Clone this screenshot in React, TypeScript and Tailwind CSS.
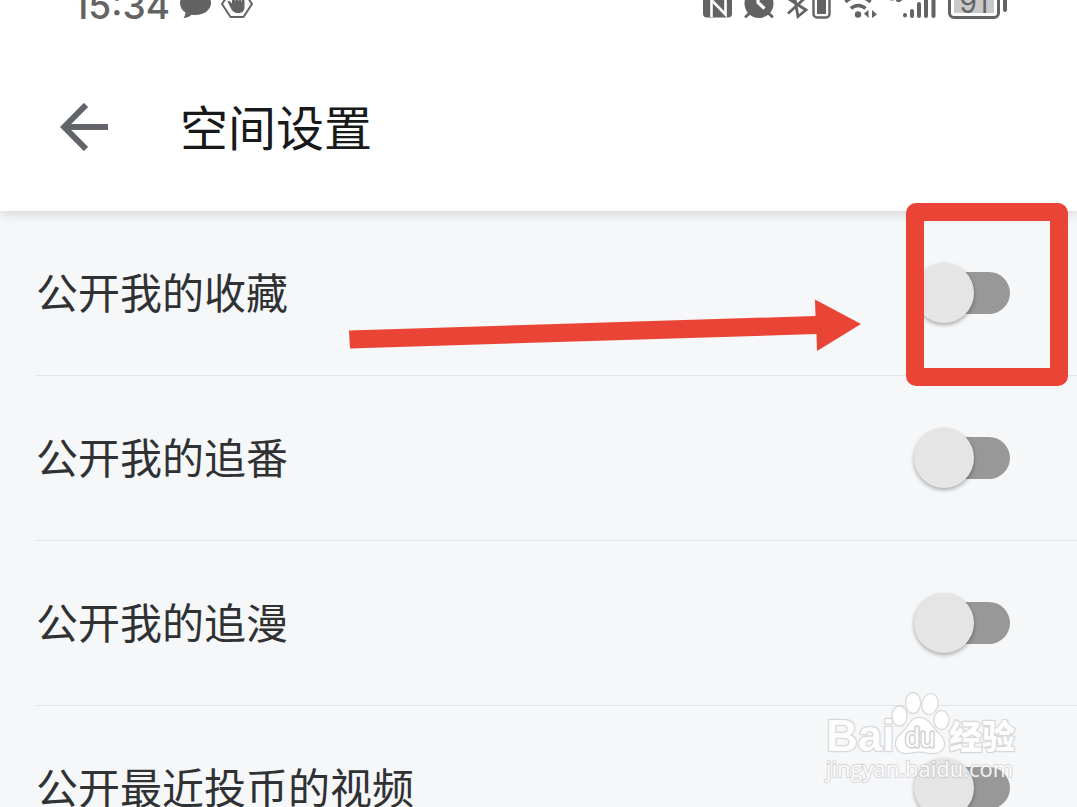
import { useState } from "react";

const ROWS = [
  { id: "favorites", label: "公开我的收藏" },
  { id: "bangumi", label: "公开我的追番" },
  { id: "comics", label: "公开我的追漫" },
  { id: "coins", label: "公开最近投币的视频" },
];

export default function App() {
  const [open, setOpen] = useState<Record<string, boolean>>({});

  function toggle(id: string) {
    setOpen((o) => ({ ...o, [id]: !o[id] }));
  }

  return (
    <div className="relative h-screen overflow-hidden bg-[#f5f7f9] font-['Noto_Sans_CJK_SC',sans-serif]">
      {/* 头部 */}
      <header className="relative bg-white shadow-[0_2px_12px_rgba(0,0,0,0.16)]">
        <StatusBar />
        <div className="flex items-center gap-[72px] pt-[81px] pb-[58px] pl-15">
          <button type="button" aria-label="返回" className="text-[#616569]">
            <svg width="48" height="48" viewBox="0 0 48 48" fill="none" stroke="currentColor" strokeWidth="6">
              <path d="M26 2 4.2 24 26 46" />
              <path d="M7 24h41" />
            </svg>
          </button>
          <h1 className="pb-1 text-5xl leading-12 text-[#18191b]">空间设置</h1>
        </div>
      </header>

      {/* 设置列表 */}
      <main className="pl-9">
        {ROWS.map((row, i) => (
          <div
            key={row.id}
            className="relative flex items-center justify-between border-b border-[#e2e4e7] py-[52px] pr-[67px]"
          >
            <label htmlFor={row.id} className="pb-1 text-[42px] leading-14 text-[#303133]">
              {row.label}
            </label>
            <Switch id={row.id} checked={!!open[row.id]} onChange={() => toggle(row.id)} />
            {i === 0 && <Pointer />}
          </div>
        ))}
      </main>

      <Watermark />
    </div>
  );
}

function Switch({ id, checked, onChange }: { id: string; checked: boolean; onChange: () => void }) {
  return (
    <input
      id={id}
      type="checkbox"
      role="switch"
      checked={checked}
      onChange={onChange}
      className="relative h-15 w-24 shrink-0 appearance-none before:absolute before:top-[9px] before:right-0 before:h-[42px] before:w-20 before:rounded-full before:bg-[#989898] after:absolute after:top-0 after:left-0 after:size-15 after:rounded-full after:bg-[#e5e5e5] after:shadow-[0_2px_4px_rgba(0,0,0,0.32)] checked:before:bg-[#fbb6cb] checked:after:left-9 checked:after:bg-[#fb7299]"
    />
  );
}

// 红框和箭头
function Pointer() {
  return (
    <>
      <svg
        className="pointer-events-none absolute top-[88px] right-[216px]"
        width="512"
        height="52"
        viewBox="0 0 512 52"
        fill="#ea4436"
      >
        <path d="M0 31.5 466.5 17 466 0.5 512 25 468 52 467.5 35 1 49.5z" />
      </svg>
      <div className="pointer-events-none absolute -top-2 right-[9px] h-[183px] w-[162px] rounded-[10px] border-18 border-[#ea4436]" />
    </>
  );
}

function StatusBar() {
  return (
    <div className="flex h-5 items-end justify-between overflow-hidden pr-[70px] pl-[73px] text-[#636363]">
      <div className="flex items-end gap-[10px]">
        <span className="font-['Inter',sans-serif] text-[37px] leading-7 font-medium">15:34</span>
        <svg width="31" height="30" viewBox="0 0 31 30" fill="currentColor">
          <path d="M15.5 0C7 0 0 6 0 13c0 4 2 7.300 5.500 9.500-.2 2-.8 3.900-2 5.500 3.500-.2 6.200-1.400 8-3.300 1.300.2 2.600.3 4 .3C24 25 31 20 31 13S24 0 15.500 0z" />
        </svg>
        <svg width="32" height="30" viewBox="0 0 32 30">
          <path
            d="M10 0.500h12L31 14l-8.500 13h-13L1 14z"
            fill="none"
            stroke="currentColor"
            strokeWidth="2"
            strokeLinejoin="round"
          />
          <path
            d="M6.500 11.500c1.200-1 2.500-.2 3.500 1l1 1V5c0-1.800 2.800-1.800 2.800 0v6h.5V3c0-1.800 2.900-1.800 2.900 0v8h.5V4c0-1.800 2.800-1.800 2.800 0v8h.5V7c0-1.800 2.500-1.800 2.500 0v9.500c0 4.500-2 6.500-6 6.500-4.500 0-6.500-2-8-5.500z"
            fill="currentColor"
          />
        </svg>
      </div>

      <div className="flex items-end gap-3">
        {/* NFC */}
        <svg width="30" height="30" viewBox="0 0 30 30">
          <rect x="1" y="0" width="29" height="27.500" rx="4" fill="currentColor" />
          <path d="M9.500 27V10l14 14.500V4" fill="none" stroke="#fff" strokeWidth="2.600" />
        </svg>
        {/* 闹钟 */}
        <svg width="30" height="30" viewBox="0 0 30 30">
          <path d="M7 22l-5 4.500M23 22l5 4.500" stroke="currentColor" strokeWidth="3" strokeLinecap="round" />
          <circle cx="15" cy="13.500" r="14.500" fill="currentColor" />
          <path d="M14 3v9.500l6.500 6" fill="none" stroke="#fff" strokeWidth="3.200" />
        </svg>
        {/* 蓝牙设备电量 */}
        <svg width="46" height="30" viewBox="0 0 46 30" fill="none" stroke="currentColor">
          <path d="M2 23.500 18 9M8 4l4 22.500 8-6.500L3 9" strokeWidth="2.800" />
          <rect x="27.500" y="0" width="16" height="27.500" rx="3.500" strokeWidth="2.400" />
          <rect x="31" y="3" width="9" height="21" fill="currentColor" stroke="none" />
        </svg>
        {/* 无线网络 */}
        <svg width="34" height="30" viewBox="0 0 34 30" fill="none" stroke="currentColor" strokeWidth="3.400">
          <path d="M1.500 12C8 5.500 20 5.500 26.500 12" />
          <path d="M7 18.500c4-4 10.500-4 14.500 0" />
          <circle cx="14" cy="24.500" r="3.200" fill="currentColor" stroke="none" />
          <path d="M24.500 20v8l-4.500-4.500zM28 28v-8l5 4.500z" fill="currentColor" stroke="none" />
        </svg>
        {/* 信号 */}
        <svg width="46" height="30" viewBox="0 0 46 30" fill="none" stroke="currentColor" strokeLinecap="round">
          <path d="M1 9.500h2M7 10.500c2 1 4 .5 4.500-2" strokeWidth="2" />
          <path d="M15 25v.5M22 21v5M29 14v12M36 7v19M43.500 0v26" strokeWidth="4" />
        </svg>
        {/* 电池 */}
        <div className="flex h-8 w-[59px] items-start justify-between">
          <div className="h-[31px] w-[52px] rounded-md border-[3px] border-current p-[3px]">
            <div className="flex h-full items-end justify-center bg-[#c9c9c9] font-['Inter',sans-serif] text-[28px] leading-5">
              91
            </div>
          </div>
          <div className="h-6 w-1 rounded-full bg-current" />
        </div>
      </div>
    </div>
  );
}

function Watermark() {
  return (
    <svg
      className="pointer-events-none absolute right-[55px] bottom-[21px]"
      width="200"
      height="98"
      viewBox="0 0 200 98"
      role="img"
      aria-label="Baidu经验"
      fill="#fff"
      fillOpacity="0.95"
      stroke="#d6d8da"
      strokeWidth="2.400"
      paintOrder="stroke"
      strokeLinejoin="round"
    >
      <text x="4" y="63" fontSize="44" fontWeight="700" fontFamily="'Liberation Sans', sans-serif">
        Bai
      </text>
      <ellipse cx="77.500" cy="28" rx="7" ry="9.500" />
      <ellipse cx="91" cy="15" rx="7" ry="10" />
      <ellipse cx="108" cy="16" rx="7.500" ry="10" transform="rotate(14 108 16)" />
      <ellipse cx="119.500" cy="32" rx="7" ry="9" />
      <path d="M97 30c8 0 11 6 16 12 5 5.500 9 8 9 14 0 6-5 9-11 9-5 0-9-1.500-14-1.500S88 65 84 65c-6 0-10-4-10-9.500 0-6 5-9 10-14.500 4-5 6-11 13-11z" />
      <text
        x="98"
        y="59"
        fontSize="27"
        textAnchor="middle"
        fontFamily="'Liberation Sans', sans-serif"
        fill="#fff"
        stroke="#cfd1d3"
        strokeWidth="3"
      >
        du
      </text>
      <text x="127" y="61" fontSize="33" fontWeight="900" fontFamily="'Noto Sans CJK SC', sans-serif">
        经验
      </text>
      <text
        x="4"
        y="89"
        fontSize="22"
        fontWeight="500"
        fontFamily="'Open Sans', sans-serif"
        fillOpacity="0.9"
        stroke="#aaa"
        strokeOpacity="0.35"
      >
        jingyan.baidu.com
      </text>
    </svg>
  );
}
